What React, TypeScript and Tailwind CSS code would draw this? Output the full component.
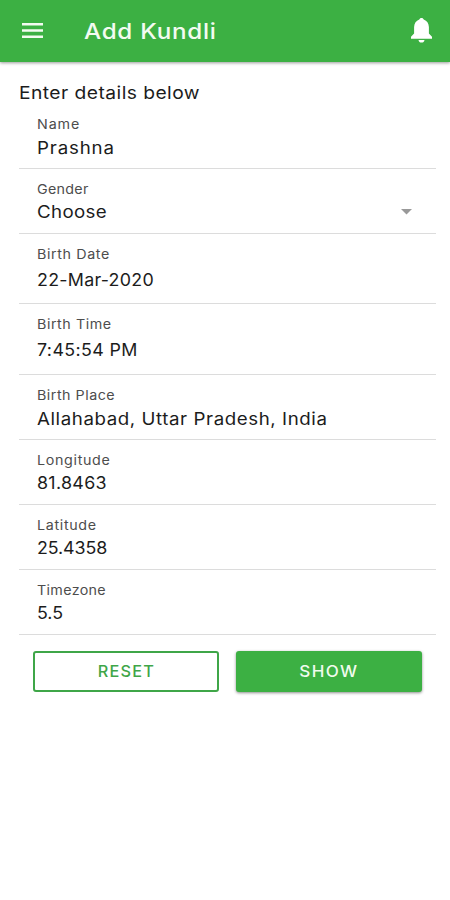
import React from 'react';
import clsx from 'clsx';

type Field = {
    label: string;
    value: string;
    row: string;
    labelStyle: string;
    valueStyle: string;
    select?: boolean;
};

const fields: Field[] = [
    { label: 'Name', value: 'Prashna', row: 'h-[65px] pt-2.5 gap-0.5', labelStyle: 'tracking-[0.8px]', valueStyle: 'scale-x-110 tracking-[0.75px]' },
    { label: 'Gender', value: 'Choose', row: 'h-[65px] pt-2.5 gap-px', labelStyle: 'tracking-[0.25px]', valueStyle: 'scale-x-110 tracking-[0.3px]', select: true },
    { label: 'Birth Date', value: '22-Mar-2020', row: 'h-[70px] pt-2.5 gap-1', labelStyle: 'tracking-[0.55px]', valueStyle: 'scale-x-105 tracking-[0.25px]' },
    { label: 'Birth Time', value: '7:45:54 PM', row: 'h-[71px] pt-2.5 gap-1', labelStyle: 'tracking-[0.5px]', valueStyle: 'scale-x-105 tracking-[0.35px]' },
    { label: 'Birth Place', value: 'Allahabad, Uttar Pradesh, India', row: 'h-[65px] pt-2.5 gap-0.5', labelStyle: 'tracking-[0.45px]', valueStyle: 'scale-x-110 tracking-[0.52px]' },
    { label: 'Longitude', value: '81.8463', row: 'h-[65px] pt-2.5 gap-px', labelStyle: 'tracking-[0.6px]', valueStyle: 'scale-x-105 tracking-[0.3px]' },
    { label: 'Latitude', value: '25.4358', row: 'h-[65px] pt-2.5 gap-px', labelStyle: 'tracking-[0.6px]', valueStyle: 'scale-x-105 tracking-[-0.1px]' },
    { label: 'Timezone', value: '5.5', row: 'h-[65px] pt-2.5 gap-px', labelStyle: 'tracking-[0.3px]', valueStyle: 'scale-x-105' },
];

const Header = () => {
    return (
        <header className="flex h-[62px] items-center bg-[#3cb043] pl-[22px] pr-[18px] text-white shadow-[0_1px_3px_rgba(0,0,0,0.4)]">
            <button aria-label="Menu" className="-mt-px">
                <svg width="21" height="15" viewBox="0 0 21 15" fill="#f3fbf1" className="block">
                    <path d="M0 0h21v2.500H0zM0 6.200h21v2.500H0zM0 12.400h21v2.500H0z" />
                </svg>
            </button>
            <div className="ml-[41px] flex-1">
                <h1 className="w-max origin-left scale-x-110 text-[22px] font-medium leading-[30px] tracking-[0.65px] text-[#f3fbf1]">Add Kundli</h1>
            </div>
            <button aria-label="Notifications" className="-mt-0.5">
                <svg width="21" height="25" viewBox="0 0 21 25" fill="currentColor" className="block">
                    <path d="M10.500 0c1.200 0 1.900.6 2.200 1.500C16 2.700 17.700 5.200 17.900 9v6.500L21 18.800v2H0v-2l3.100-3.300V9c.2-3.800 1.900-6.300 5.200-7.500C8.600.6 9.300 0 10.500 0Z" />
                    <path d="M7.500 22h6c-.2 1.700-1.300 2.600-3 2.600s-2.800-.9-3-2.600Z" />
                </svg>
            </button>
        </header>
    );
};

const FieldRow = ({ label, value, row, labelStyle, valueStyle, select }: Field) => {
    return (
        <div className={clsx('flex flex-col whitespace-nowrap border-b border-[#dcdcdc] pl-[18px] pr-6', row)}>
            <span className={clsx('w-max origin-left scale-x-110 text-[13px] leading-5 text-[#4d4d4d]', labelStyle)}>{label}</span>
            <div className="flex items-center justify-between">
                <span className={clsx('origin-left text-[17px] leading-6 text-[#1c1c1c]', valueStyle)}>{value}</span>
                {select && (
                    <svg width="11" height="6" viewBox="0 0 11 6" fill="#999999">
                        <path d="M0 0h11L5.500 5.500Z" />
                    </svg>
                )}
            </div>
        </div>
    );
};

const App = () => {
    return (
        <div className="min-h-[900px] w-full bg-white font-['Inter',sans-serif]">
            <Header />
            <main className="pl-[19px] pr-3.5 pt-[19px]">
                <p className="h-[23px] w-max origin-left scale-x-110 text-[17.5px] leading-6 tracking-[0.4px] text-[#1c1c1c]">Enter details below</p>
                {fields.map((field) => (
                    <FieldRow key={field.label} {...field} />
                ))}
                <div className="flex gap-[17px] pl-3.5 pt-4">
                    <button className="flex h-[41px] w-[186px] items-center justify-center rounded-[3px] border-2 border-[#3fa648] bg-white text-[15.5px] font-medium text-[#3fa648]">
                        <span className="scale-x-105 tracking-[1.2px]">RESET</span>
                    </button>
                    <button className="flex h-[41px] w-[186px] items-center justify-center rounded-[3px] bg-[#3cb043] text-[15.5px] font-medium text-[#f0fbee] shadow-[0_1px_3px_rgba(0,0,0,0.45)]">
                        <span className="scale-x-110 tracking-[1.2px]">SHOW</span>
                    </button>
                </div>
            </main>
        </div>
    );
};

export default App;
